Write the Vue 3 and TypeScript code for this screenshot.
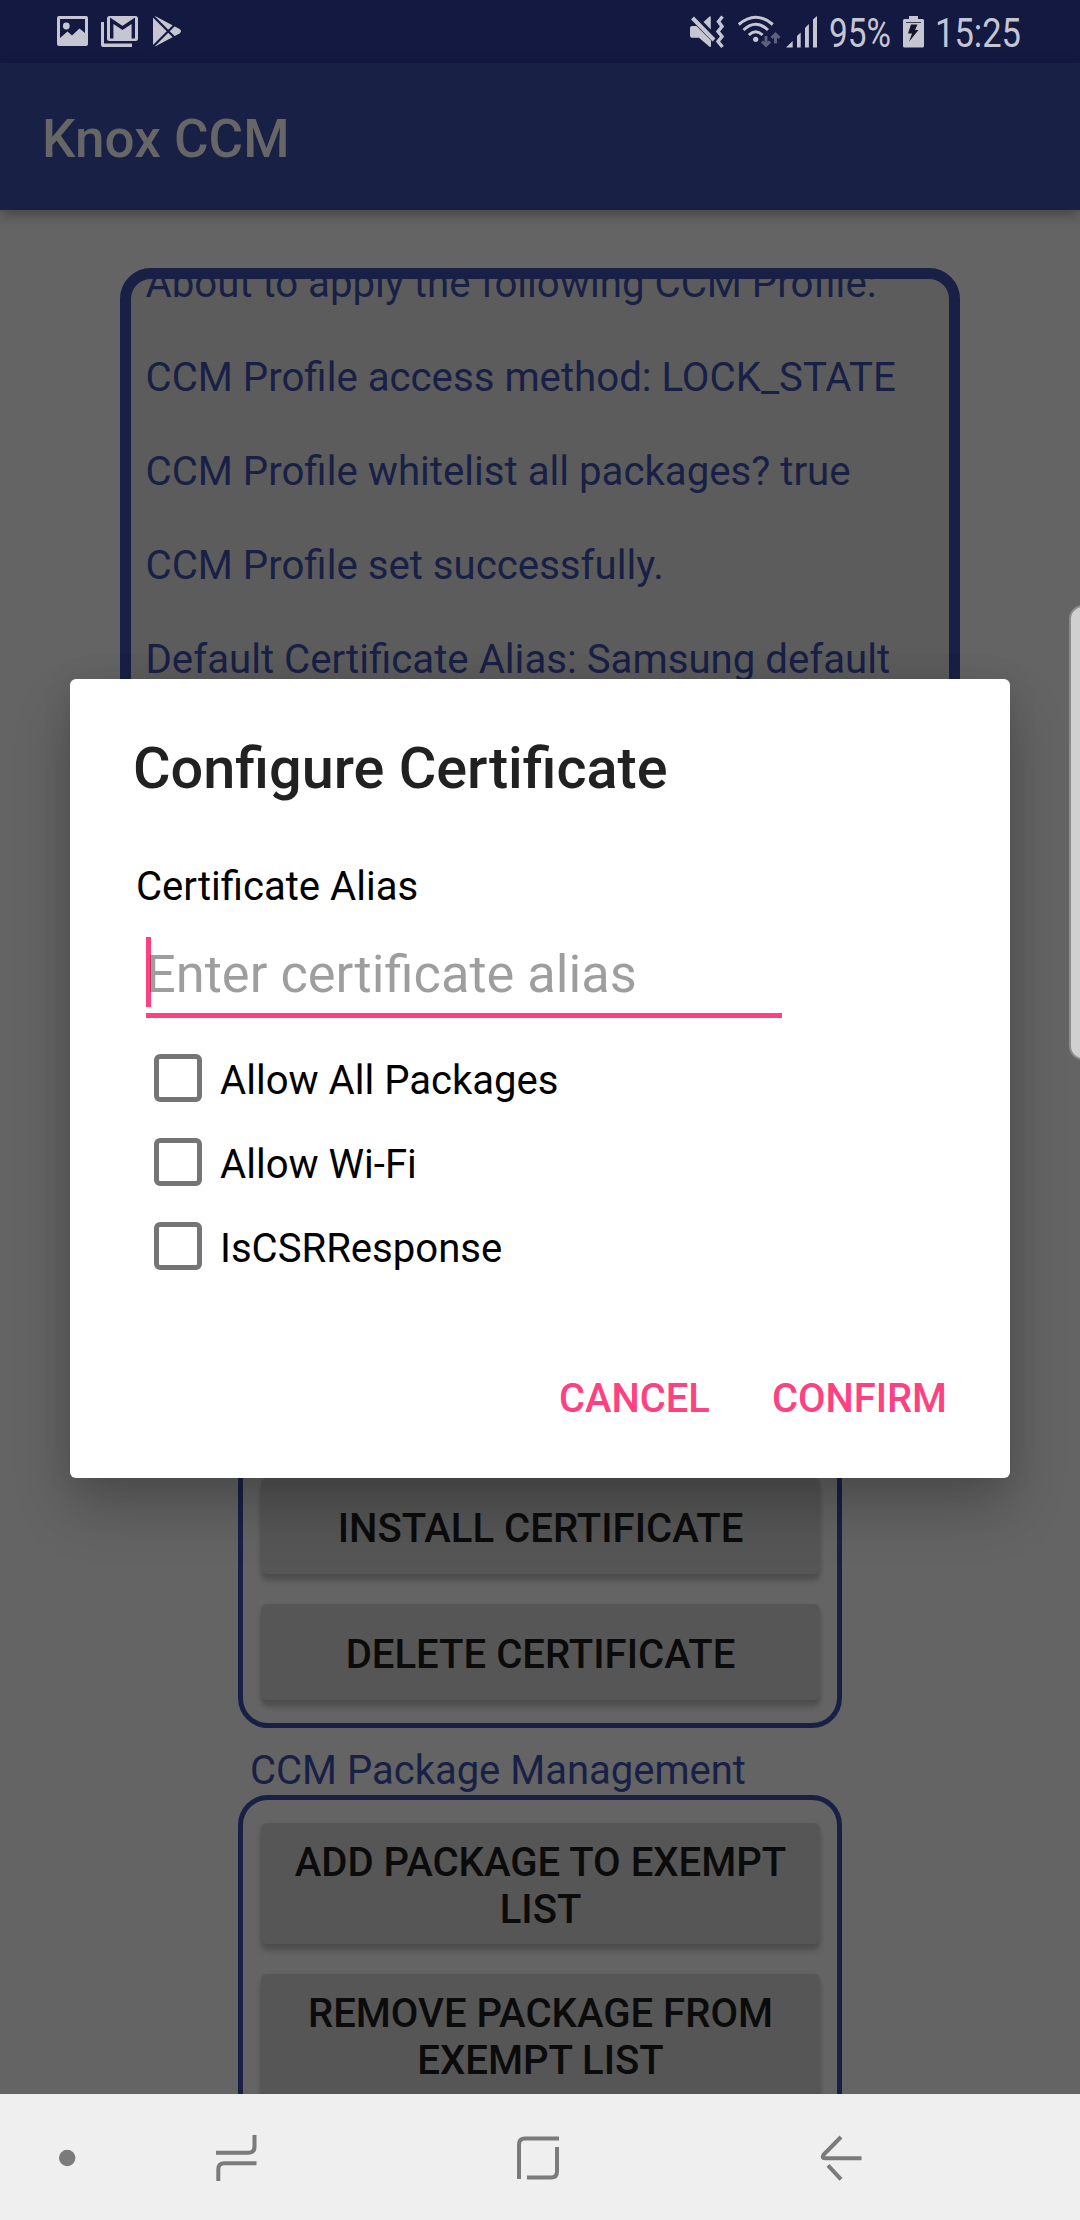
<script setup lang="ts">
import { ref } from 'vue'

interface Option {
  label: string
  checked: boolean
}

const logLines: string[] = [
  'About to apply the following CCM Profile:',
  'CCM Profile access method: LOCK_STATE',
  'CCM Profile whitelist all packages? true',
  'CCM Profile set successfully.',
  'Default Certificate Alias: Samsung default',
]

const certificateActions: string[] = ['Install Certificate', 'Delete Certificate']
const packageActions: string[] = ['Add package to exempt list', 'Remove package from exempt list']

const options = ref<Option[]>([
  { label: 'Allow All Packages', checked: false },
  { label: 'Allow Wi-Fi', checked: false },
  { label: 'IsCSRResponse', checked: false },
])
</script>

<template>
  <div class="screen">
    <header class="status">
      <svg class="ic" width="31" height="32" viewBox="57 16 31 32">
        <path fill-rule="evenodd" d="M59 16H86a2 2 0 0 1 2 2V44a2 2 0 0 1-2 2H59a2 2 0 0 1-2-2V18a2 2 0 0 1 2-2ZM60 19V38L67.5 31.5 72 35.5 79.500 28.500 85 33V19Z" />
        <circle cx="66.300" cy="26" r="3.400" />
      </svg>
      <svg class="ic gmail" width="38" height="32" viewBox="101 16 38 32">
        <path d="M101 22h3V43.500h28V47H103a2 2 0 0 1-2-2Z" />
        <rect x="107" y="16" width="31" height="25" rx="2.500" />
        <path class="cut" d="M111.700 38.500V20.800L122.500 28 133.300 20.800V38.500" />
      </svg>
      <svg class="ic play" width="29" height="32" viewBox="153 16 29 32">
        <path d="M153 17.500Q154 15.500 156 16.500L179.500 29Q182.500 31.200 179.500 33.500L156 46Q154 47 153 45Z" />
        <path class="cut thin" d="M151.500 14.500L175.500 38.500M151.500 48L175.500 24" />
      </svg>

      <div class="right">
        <svg class="ic" width="34" height="32" viewBox="690 16 34 32">
          <path d="M692 26H696.500L711 40.500V46.800H709.500L699 37.800H692a2 2 0 0 1-2-2V28a2 2 0 0 1 2-2ZM703.500 22L709.500 16.500H710.800V29.500Z" />
          <path class="line w4" d="M692.500 18L714 40" />
          <path class="line w3" d="M722.500 16.500L718.500 21.500 722 26.500 718 31.500 722 36.500 718 41.500 722.500 47" />
        </svg>
        <svg class="ic wifi" width="43" height="32" viewBox="738 16 43 32">
          <path class="line" d="M738.800 24.500Q755.700 10 772.800 24.500M743.500 30Q755.700 18.500 768 30M748.800 35Q755.700 28.500 762.600 35" />
          <circle cx="755.700" cy="39.300" r="2.600" />
          <path class="line dim" d="M766 36V45M762 41.500L766 45.500 770 41.500M775.500 43.500V34.500M771.500 38L775.500 34 779.500 38" />
        </svg>
        <svg class="ic signal" width="32" height="32" viewBox="786 16 32 32">
          <path d="M786 47.500L792.700 41V47.500ZM797 47.500V36L800.700 32.500V47.500ZM805 47.500V28L808.900 24V47.500ZM813 47.500V19.500L817 16V47.500Z" />
        </svg>
        <svg class="ic percent" width="62" height="32" viewBox="830 16 62 32">
          <text x="829" y="47" textLength="62" lengthAdjust="spacingAndGlyphs">95%</text>
        </svg>
        <svg class="ic battery" width="21" height="32" viewBox="903 16 21 32">
          <path d="M909 16H918V19H922.500a1.500 1.500 0 0 1 1.500 1.500V46a1.500 1.500 0 0 1-1.500 1.500H904.500a1.500 1.500 0 0 1-1.500-1.500V20.500a1.500 1.500 0 0 1 1.500-1.500H909Z" />
          <path class="bolt" d="M906 22.200h15v.8h-15ZM911 24.500H917.500L915 30H918.500L909 41.800 912 33.500H908Z" />
        </svg>
        <svg class="ic time" width="84" height="32" viewBox="936 16 84 32">
          <text x="935" y="47" textLength="86" lengthAdjust="spacingAndGlyphs">15:25</text>
        </svg>
      </div>
    </header>

    <div class="toolbar"><h1>Knox CCM</h1></div>

    <main class="content">
      <section class="log">
        <div class="log-text">
          <p v-for="line in logLines" :key="line">{{ line }}</p>
        </div>
      </section>

      <section class="group certs">
        <button v-for="a in certificateActions" :key="a" type="button">{{ a }}</button>
      </section>

      <h2 class="group-title">CCM Package Management</h2>
      <section class="group">
        <button v-for="a in packageActions" :key="a" type="button" class="tall">{{ a }}</button>
      </section>
    </main>

    <nav class="nav">
      <svg width="1080" height="126" viewBox="0 2094 1080 126">
        <circle cx="67.200" cy="2158" r="8.200" />
        <path d="M216 2152.700H248.500Q254.500 2152.700 254.500 2146.500V2135M256.500 2163.300H224.500Q218.300 2163.300 218.300 2169.500V2181" />
        <path d="M519 2179V2144.500Q519 2138.500 525 2138.500H559M557 2147V2171.500Q557 2177.600 551 2177.600H527" />
        <path d="M841 2137L823.500 2154.800Q821.300 2158.300 825 2158.300H861.500M828 2165.300L841 2179.300" />
      </svg>
    </nav>

    <aside class="edge-handle"></aside>

    <div class="dialog" role="dialog">
      <h2>Configure Certificate</h2>
      <label class="alias">Certificate Alias</label>
      <div class="field">
        <span class="caret"></span>
        <span class="hint">Enter certificate alias</span>
      </div>
      <ul class="options">
        <li v-for="o in options" :key="o.label" @click="o.checked = !o.checked">
          <span class="box"></span>
          <span class="option-label">{{ o.label }}</span>
        </li>
      </ul>
      <div class="actions">
        <span>CANCEL</span>
        <span>CONFIRM</span>
      </div>
    </div>
  </div>
</template>

<style>
body {
  margin: 0;
}
</style>

<style scoped>
.screen {
  position: relative;
  width: 1080px;
  height: 2220px;
  overflow: hidden;
  display: flex;
  flex-direction: column;
  background: #646464;
  font-family: Roboto, 'Liberation Sans', sans-serif;
  font-size: 40.1px;
  line-height: 47px;
  color: #192046;
}
h1,
h2,
p,
ul {
  margin: 0;
  padding: 0;
}
.status {
  flex: none;
  display: flex;
  box-sizing: border-box;
  height: 63px;
  padding: 16px 60px 0 57px;
  background: #131940;
}
.ic {
  display: block;
  flex: none;
  overflow: visible;
  fill: #c6c6d2;
}
.gmail {
  margin-left: 13px;
}
.play {
  margin-left: 14px;
}
.cut {
  fill: none;
  stroke: #131940;
  stroke-width: 3.4;
}
.thin {
  stroke-width: 2.2;
}
.right {
  display: flex;
  margin-left: auto;
}
.line {
  fill: none;
  stroke: #c6c6d2;
  stroke-width: 3;
}
.w4 {
  stroke-width: 4;
}
.w3 {
  stroke-width: 3.4;
}
.dim {
  stroke: #5d617d;
}
.wifi {
  margin-left: 14px;
}
.signal {
  margin-left: 5px;
}
.percent {
  margin-left: 12px;
}
.battery {
  margin-left: 11px;
}
.time {
  margin-left: 12px;
}
.bolt {
  fill: #131629;
}
.toolbar {
  position: relative;
  flex: none;
  box-sizing: border-box;
  display: flex;
  align-items: center;
  height: 147px;
  padding: 5px 0 0 42px;
  background: #192046;
  box-shadow: 0 5px 12px rgba(0, 0, 0, 0.3);
}
.toolbar h1 {
  font-size: 53px;
  font-weight: 500;
  color: #666;
}
.content {
  flex: 1;
  min-height: 0;
  overflow: hidden;
  display: flex;
  flex-direction: column;
  align-items: center;
}
.log {
  flex: none;
  box-sizing: border-box;
  width: 840px;
  height: 640px;
  margin-top: 58px;
  border: 11px solid #192046;
  border-radius: 31px;
  background: #5c5c5c;
  overflow: hidden;
}
.log-text {
  display: flex;
  flex-direction: column;
  gap: 47px;
  margin-top: -19px;
  padding-left: 14.5px;
  font-size: 40.2px;
  white-space: nowrap;
}
.group {
  flex: none;
  box-sizing: border-box;
  width: 604px;
  padding: 23px 17px 23px 18px;
  border: 5px solid #192046;
  border-radius: 30px;
  display: flex;
  flex-direction: column;
  gap: 30px;
}
.certs {
  height: 278px;
  margin-top: 542px;
}
.group button {
  flex: none;
  height: 96px;
  padding: 4px 20px 0;
  border: 0;
  border-radius: 6px;
  background: #565656;
  box-shadow: 0 7px 5px rgba(0, 0, 0, 0.2), 0 1px 4px rgba(0, 0, 0, 0.08);
  font: 500 40.1px/47px Roboto, 'Liberation Sans', sans-serif;
  text-transform: uppercase;
  color: #0b0b0b;
}
.group button.tall {
  height: 121px;
}
.group-title {
  flex: none;
  width: 580px;
  margin: 19px 0 1px;
  font-size: 40px;
  font-weight: 400;
}
.nav {
  flex: none;
  height: 126px;
  background: #efefef;
}
.nav svg {
  display: block;
  fill: none;
  stroke: #7b7b7b;
  stroke-width: 4;
}
.nav circle {
  fill: #7b7b7b;
  stroke: none;
}
.edge-handle {
  position: absolute;
  top: 605px;
  right: -20px;
  box-sizing: border-box;
  width: 31px;
  height: 455px;
  border: 2px solid #8c8c8c;
  border-radius: 14px;
  background: #d0d0d0;
}
.dialog {
  position: absolute;
  left: 70px;
  top: 679px;
  width: 940px;
  height: 799px;
  box-sizing: border-box;
  display: flex;
  flex-direction: column;
  padding: 57px 63px 40px;
  border-radius: 6px;
  background: #fff;
  box-shadow: 0 30px 56px rgba(0, 0, 0, 0.23), 0 0 30px rgba(0, 0, 0, 0.08);
  color: #000;
}
.dialog h2 {
  font-size: 57.6px;
  line-height: 66px;
  font-weight: 500;
  color: #212121;
}
.alias {
  margin: 61px 0 0 3px;
}
.field {
  position: relative;
  width: 636px;
  height: 76px;
  margin: 27px 0 0 13px;
  border-bottom: 5px solid #ff4081;
}
.caret {
  position: absolute;
  left: 0;
  top: 0;
  width: 5px;
  height: 70px;
  background: #ff4081;
}
.hint {
  position: relative;
  display: block;
  line-height: 74px;
  font-size: 52.4px;
  color: rgba(0, 0, 0, 0.38);
}
.options {
  list-style: none;
  margin: 18px 0 0 21px;
}
.options li {
  display: flex;
  align-items: center;
  gap: 18px;
  height: 84px;
}
.option-label {
  padding-top: 5px;
}
.box {
  box-sizing: border-box;
  width: 48px;
  height: 48px;
  border: 5.5px solid #757575;
  border-radius: 6px;
}
.actions {
  display: flex;
  justify-content: flex-end;
  gap: 62px;
  margin-top: 87px;
  font-size: 39.9px;
  font-weight: 500;
  color: #ff4081;
}
</style>
